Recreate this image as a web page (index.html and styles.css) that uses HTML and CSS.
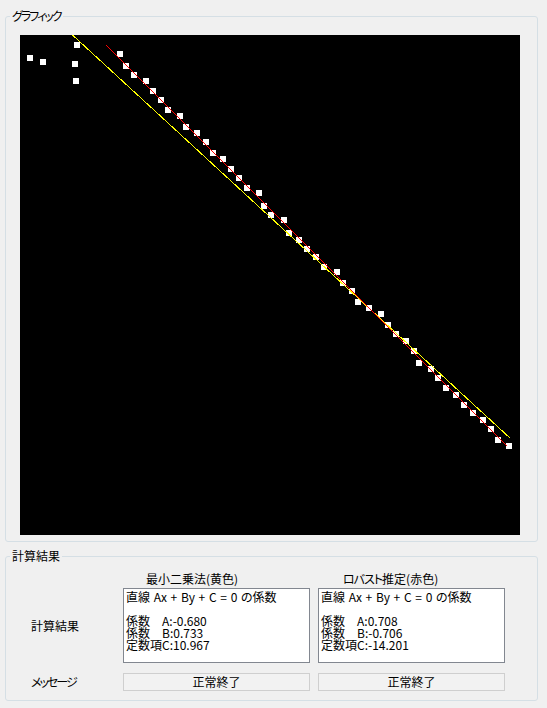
FILE: index.html
```html
<!DOCTYPE html>
<html lang="ja">
<head>
<meta charset="utf-8">
<title>グラフィック</title>
<link rel="stylesheet" href="styles.css">
</head>
<body>
<div class="window">
  <fieldset class="group graph">
    <legend><span class="kana-tight">グラフィック</span></legend>
    <div class="graph-body">
      <svg class="plot" width="500" height="500" viewBox="0 0 500 500" shape-rendering="crispEdges">
        <rect x="0" y="0" width="500" height="500" fill="#000"/>
        <g fill="#fff">
          <rect x="7" y="20" width="6" height="6"/>
          <rect x="20" y="24" width="6" height="6"/>
          <rect x="54" y="7" width="6" height="6"/>
          <rect x="52" y="26" width="6" height="6"/>
          <rect x="53" y="43" width="6" height="6"/>
          <rect x="97" y="16" width="6" height="6"/>
          <rect x="103" y="28" width="6" height="6"/>
          <rect x="111" y="37" width="6" height="6"/>
          <rect x="123" y="43" width="6" height="6"/>
          <rect x="130" y="53" width="6" height="6"/>
          <rect x="138" y="62" width="6" height="6"/>
          <rect x="145" y="72" width="6" height="6"/>
          <rect x="157" y="78" width="6" height="6"/>
          <rect x="163" y="89" width="6" height="6"/>
          <rect x="174" y="95" width="6" height="6"/>
          <rect x="183" y="104" width="6" height="6"/>
          <rect x="190" y="115" width="6" height="6"/>
          <rect x="200" y="121" width="6" height="6"/>
          <rect x="208" y="131" width="6" height="6"/>
          <rect x="216" y="140" width="6" height="6"/>
          <rect x="224" y="150" width="6" height="6"/>
          <rect x="236" y="155" width="6" height="6"/>
          <rect x="241" y="168" width="6" height="6"/>
          <rect x="248" y="177" width="6" height="6"/>
          <rect x="261" y="182" width="6" height="6"/>
          <rect x="266" y="195" width="6" height="6"/>
          <rect x="276" y="202" width="6" height="6"/>
          <rect x="284" y="211" width="6" height="6"/>
          <rect x="293" y="219" width="6" height="6"/>
          <rect x="301" y="229" width="6" height="6"/>
          <rect x="314" y="234" width="6" height="6"/>
          <rect x="320" y="245" width="6" height="6"/>
          <rect x="329" y="253" width="6" height="6"/>
          <rect x="335" y="264" width="6" height="6"/>
          <rect x="346" y="270" width="6" height="6"/>
          <rect x="358" y="276" width="6" height="6"/>
          <rect x="365" y="287" width="6" height="6"/>
          <rect x="373" y="296" width="6" height="6"/>
          <rect x="383" y="303" width="6" height="6"/>
          <rect x="391" y="313" width="6" height="6"/>
          <rect x="396" y="325" width="6" height="6"/>
          <rect x="408" y="331" width="6" height="6"/>
          <rect x="415" y="340" width="6" height="6"/>
          <rect x="423" y="350" width="6" height="6"/>
          <rect x="433" y="357" width="6" height="6"/>
          <rect x="441" y="367" width="6" height="6"/>
          <rect x="450" y="375" width="6" height="6"/>
          <rect x="460" y="382" width="6" height="6"/>
          <rect x="468" y="391" width="6" height="6"/>
          <rect x="475" y="402" width="6" height="6"/>
          <rect x="486" y="408" width="6" height="6"/>
        </g>
        <line x1="52.5" y1="0" x2="490.5" y2="403.5" stroke="#ffff00" stroke-width="1"/>
        <line x1="86.5" y1="10.5" x2="487.5" y2="411.5" stroke="#ff0000" stroke-width="1"/>
      </svg>
    </div>
  </fieldset>

  <fieldset class="group result">
    <legend>計算結果</legend>
    <div class="result-grid">
      <div class="col-head head-ls">最小二乗法(黄色)</div>
      <div class="col-head head-rb"><span class="kana-mid">ロバスト</span>推定(赤色)</div>

      <div class="row-label label-result">計算結果</div>
      <div class="textbox">直線 Ax + By + C = 0 の係数

係数　A:-0.680
係数　B:0.733
定数項C:10.967</div>
      <div class="textbox">直線 Ax + By + C = 0 の係数

係数　A:0.708
係数　B:-0.706
定数項C:-14.201</div>

      <div class="row-label label-msg"><span class="kana-tight">メッセージ</span></div>
      <div class="msgbox">正常終了</div>
      <div class="msgbox">正常終了</div>
    </div>
  </fieldset>
</div>
</body>
</html>
```

FILE: styles.css
```css
html, body {
  margin: 0;
  padding: 0;
  background: #f0f0f0;
}

body {
  font-family: "Noto Sans CJK JP", "Noto Sans", sans-serif;
  font-size: 12px;
  color: #000;
  font-feature-settings: "palt";
}

.kana-tight {
  letter-spacing: -2px;
}

.kana-mid {
  letter-spacing: -1px;
}

.window {
  width: 547px;
  height: 708px;
  box-sizing: border-box;
  padding: 9px 0 0 5px;
}

.group {
  margin: 0;
  padding: 0;
  width: 533px;
  min-width: 0;
  box-sizing: border-box;
  border: 1px solid #d5dfe5;
  border-radius: 3px;
}

.group legend {
  margin-left: 4px;
  padding: 0 2px;
  height: 14px;
  line-height: 14px;
  font-size: 12px;
}

.graph-body {
  padding: 12px 0 6px 14px;
}

.plot {
  display: block;
}

.result {
  margin-top: 7px;
}

.result-grid {
  display: grid;
  grid-template-columns: 109px 187px 187px;
  column-gap: 8px;
  padding: 9px 0 9px 0;
}

.col-head {
  height: 14px;
  line-height: 14px;
  margin-bottom: 2px;
}

.head-ls {
  grid-column: 2;
  padding-left: 23px;
}

.head-rb {
  grid-column: 3;
  padding-left: 25px;
}

.row-label {
  grid-column: 1;
  padding-left: 25px;
  align-self: center;
  line-height: 14px;
}

.textbox {
  height: 75px;
  box-sizing: border-box;
  border: 1px solid #828790;
  background: #fff;
  padding: 2px 2px;
  line-height: 12px;
  white-space: pre;
  word-spacing: 1px;
  overflow: hidden;
}

.msgbox {
  margin-top: 10px;
  height: 18px;
  box-sizing: border-box;
  border: 1px solid #cfcfcf;
  background: #f2f2f2;
  text-align: center;
  line-height: 16px;
}

.label-msg {
  margin-top: 10px;
}
```
